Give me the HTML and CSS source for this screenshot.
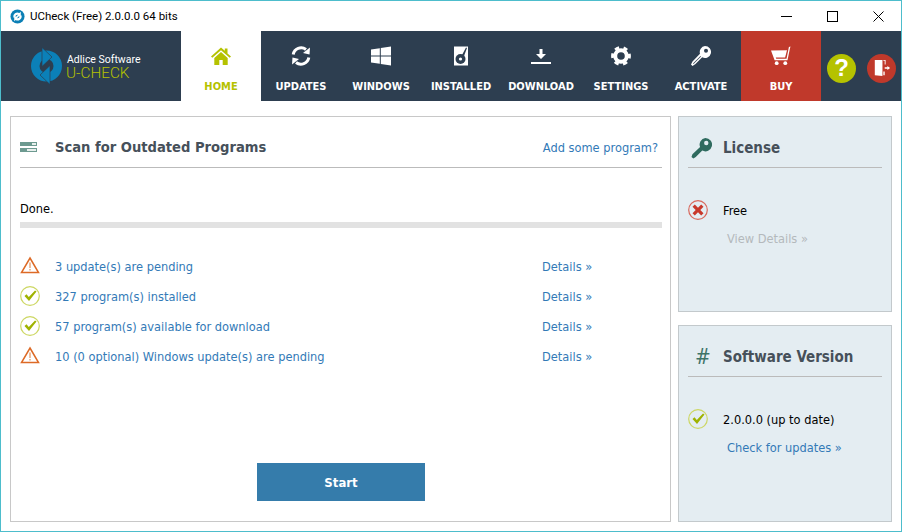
FILE: index.html
```html
<!DOCTYPE html>
<html lang="en">
<head>
<meta charset="utf-8">
<title>UCheck (Free) 2.0.0.0 64 bits</title>
<link rel="stylesheet" href="styles.css">
</head>
<body>
<div class="window">
  <header class="titlebar">
    <svg class="app-icon" viewBox="0 0 16 16"><circle cx="8" cy="8" r="7.500" fill="#0b7fb5"/><path d="M3.500 9a4.500 4.500 0 0 1 6.500-4.700L11.500 3v5H7l1.500-1.800A2.500 2.500 0 0 0 5.500 9zM12.500 7a4.500 4.500 0 0 1-6.500 4.700L4.500 13V8H9l-1.500 1.800A2.500 2.500 0 0 0 10.500 7z" fill="#fff"/></svg>
    <span class="app-title">UCheck (Free) 2.0.0.0 64 bits</span>
    <div class="win-buttons">
      <svg class="win-btn" viewBox="0 0 11 11"><path d="M0 5.500h11" stroke="#000"/></svg>
      <svg class="win-btn" viewBox="0 0 11 11"><rect x=".5" y=".5" width="10" height="10" fill="none" stroke="#000"/></svg>
      <svg class="win-btn" viewBox="0 0 11 11"><path d="M.5.5l10 10M10.500.5l-10 10" stroke="#000"/></svg>
    </div>
  </header>

  <nav class="nav">
    <div class="logo">
      <svg class="logo-mark" viewBox="0 0 34 38"><circle cx="16.500" cy="19" r="15.500" fill="#0b80b8"/><circle cx="16.500" cy="19" r="7" fill="#2d3e50"/><path d="M12 .5L22 10 12 19.500z" fill="#0b80b8" stroke="#2d3e50" stroke-width=".7"/><path d="M20 37.500L10 28l10-9.500z" fill="#0b80b8" stroke="#2d3e50" stroke-width=".7"/></svg>
      <div class="logo-text">
        <span class="logo-top">Adlice Software</span>
        <span class="logo-name">U-CHECK</span>
      </div>
    </div>
    <a class="tab active">
      <svg class="tab-icon" viewBox="0 0 20 20"><path d="M10 1.500L0 10.500l1.300 1.300L10 4.200l8.700 7.600 1.300-1.300-3.500-3.100V2.500h-2.700v2.300z" fill="#b5c200"/><path d="M3.300 12L10 6.100l6.700 5.900v7h-5v-5H8.300v5h-5z" fill="#b5c200"/></svg>
      <span>HOME</span>
    </a>
    <a class="tab">
      <svg class="tab-icon" viewBox="0 0 20 20"><path d="M2.200 8.500A8 8 0 0 1 15 3.500" fill="none" stroke="#fff" stroke-width="3"/><path d="M12 7l6.500 1.500L19 1.500z" fill="#fff"/><path d="M17.800 11.500A8 8 0 0 1 5 16.500" fill="none" stroke="#fff" stroke-width="3"/><path d="M8 13l-6.500-1.500L1 18.500z" fill="#fff"/></svg>
      <span>UPDATES</span>
    </a>
    <a class="tab">
      <svg class="tab-icon" viewBox="0 0 20 20"><path d="M0 3.500l8.800-1.300v7.300H0zM9.800 2L20 .5v9H9.800zM0 10.500h8.800v7.300L0 16.500zM9.800 10.500H20v9L9.800 18z" fill="#fff"/></svg>
      <span>WINDOWS</span>
    </a>
    <a class="tab">
      <svg class="tab-icon" viewBox="0 0 20 20"><path d="M3 .5h14v19H3z" fill="#fff"/><circle cx="9.500" cy="13" r="5" fill="#2d3e50"/><circle cx="9.500" cy="13" r="1.600" fill="#fff"/><path d="M11 9L15 1.500l1 .6-3 8z" fill="#2d3e50"/></svg>
      <span>INSTALLED</span>
    </a>
    <a class="tab">
      <svg class="tab-icon" viewBox="0 0 20 20"><path d="M8.500 3h3v5H15l-5 5-5-5h3.500zM0 16h20v2H0z" fill="#fff"/></svg>
      <span>DOWNLOAD</span>
    </a>
    <a class="tab">
      <svg class="tab-icon" viewBox="0 0 20 20"><circle cx="10" cy="10" r="5.800" fill="none" stroke="#fff" stroke-width="4"/><circle cx="10" cy="10" r="8.200" fill="none" stroke="#fff" stroke-width="3.400" stroke-dasharray="4.300 4.290" stroke-dashoffset="2.150" transform="rotate(-60 10 10)"/></svg>
      <span>SETTINGS</span>
    </a>
    <a class="tab">
      <svg class="tab-icon" viewBox="0 0 20 20"><path fill-rule="evenodd" d="M14 0a6 6 0 1 1-2.800 11.300L4.500 18 1.500 20 0 18.500l1.500-3L9 7.700A6 6 0 0 1 14 0zM15 2.800a2 2 0 1 0 0 4 2 2 0 0 0 0-4z" fill="#fff"/><path d="M2 17.500L9.500 10l.5.500L2.500 18z" fill="#2d3e50"/></svg>
      <span>ACTIVATE</span>
    </a>
    <a class="tab buy">
      <svg class="tab-icon" viewBox="0 0 21 20"><path d="M20.500 0l-1.700.6L16.300 13H5.500l-.5-1.500h9.800L16.800 4 0 4.200l3.800 10.300h13.500L20 1.500z" fill="#fff"/><circle cx="6" cy="17.500" r="2" fill="#fff"/><circle cx="15" cy="17.500" r="2" fill="#fff"/></svg>
      <span>BUY</span>
    </a>
    <div class="nav-actions">
      <div class="round help">?</div>
      <div class="round exit">
        <svg viewBox="0 0 20 20" class="exit-icon"><path d="M2 1h8.500v18L2 18z" fill="#fff"/><path d="M11.500 1H14v5h-1V2h-1.500zM11.500 14H13v4h-1.500zM13 9.300h3V7.800l3 2.200-3 2.200v-1.500h-3z" fill="#fff"/></svg>
      </div>
    </div>
  </nav>

  <main class="content">
    <section class="panel main-panel">
      <div class="panel-head">
        <svg class="head-icon" viewBox="0 0 17 10"><rect y="0" width="17" height="4" fill="#6d9a90"/><rect y="6" width="17" height="4" fill="#6d9a90"/><rect x="12" y="1" width="4" height="2" fill="#e8efed"/><rect x="7" y="7" width="9" height="2" fill="#e8efed"/></svg>
        <h2 class="main-title">Scan for Outdated Programs</h2>
        <a class="link add">Add some program?</a>
      </div>
      <p class="status">Done.</p>
      <div class="progress"></div>
      <ul class="results">
        <li>
          <svg class="ico" viewBox="0 0 20 20"><path d="M10 2L18.500 16.500H1.500z" fill="none" stroke="#dd6a26" stroke-width="1.500"/><path d="M10 6.500v5.500M10 13v1.600" stroke="#edb591" stroke-width="1.800"/></svg>
          <a class="link text">3 update(s) are pending</a><a class="link details">Details »</a>
        </li>
        <li>
          <svg class="ico" viewBox="0 0 20 20"><circle cx="10" cy="10" r="9.300" fill="none" stroke="#cdd763" stroke-width="1.200"/><path d="M4.500 10l2-1.700 2.300 2.700L15 4.500l1.500 1-7.500 9.500z" fill="#9fb300"/></svg>
          <a class="link text">327 program(s) installed</a><a class="link details">Details »</a>
        </li>
        <li>
          <svg class="ico" viewBox="0 0 20 20"><circle cx="10" cy="10" r="9.300" fill="none" stroke="#cdd763" stroke-width="1.200"/><path d="M4.500 10l2-1.700 2.300 2.700L15 4.500l1.500 1-7.500 9.500z" fill="#9fb300"/></svg>
          <a class="link text">57 program(s) available for download</a><a class="link details">Details »</a>
        </li>
        <li>
          <svg class="ico" viewBox="0 0 20 20"><path d="M10 2L18.500 16.500H1.500z" fill="none" stroke="#dd6a26" stroke-width="1.500"/><path d="M10 6.500v5.500M10 13v1.600" stroke="#edb591" stroke-width="1.800"/></svg>
          <a class="link text">10 (0 optional) Windows update(s) are pending</a><a class="link details">Details »</a>
        </li>
      </ul>
      <div class="actions"><button class="start">Start</button></div>
    </section>

    <aside class="side">
      <section class="panel card">
        <div class="panel-head">
          <svg class="card-icon" viewBox="0 0 22 22"><path fill-rule="evenodd" d="M15 0a7 7 0 1 1-3.200 13.200L5 20l-2.500 1.500L.5 20l1-3 8-7.500A7 7 0 0 1 15 0zM16 3a2.300 2.300 0 1 0 0 4.600A2.300 2.300 0 0 0 16 3z" fill="#2f6b5f"/></svg>
          <h2>License</h2>
        </div>
        <div class="info">
          <svg class="ico" viewBox="0 0 20 20"><circle cx="10" cy="10" r="9.300" fill="none" stroke="#d9685c" stroke-width="1.200"/><path d="M6.800 4.500L10 7.700l3.200-3.200 2.300 2.300L12.300 10l3.200 3.200-2.300 2.300-3.200-3.200-3.200 3.200-2.300-2.300L7.700 10 4.500 6.800z" fill="#c8382a"/></svg>
          <span>Free</span>
        </div>
        <a class="sub muted">View Details »</a>
      </section>
      <section class="panel card">
        <div class="panel-head">
          <span class="hash">#</span>
          <h2>Software Version</h2>
        </div>
        <div class="info">
          <svg class="ico" viewBox="0 0 20 20"><circle cx="10" cy="10" r="9.300" fill="none" stroke="#cdd763" stroke-width="1.200"/><path d="M4.500 10l2-1.700 2.300 2.700L15 4.500l1.500 1-7.500 9.500z" fill="#9fb300"/></svg>
          <span>2.0.0.0 (up to date)</span>
        </div>
        <a class="sub link">Check for updates »</a>
      </section>
    </aside>
  </main>
</div>
</body>
</html>
```

FILE: styles.css
```css
* { box-sizing: border-box; }
html, body { margin: 0; padding: 0; }
body { font-family: "DejaVu Sans Condensed", "DejaVu Sans", sans-serif; font-stretch: condensed; font-size: 12.700px; color: #000; background: #fff; }
.window { width: 902px; height: 532px; border: 1px solid #4dbdcc; display: flex; flex-direction: column; overflow: hidden; background: #fff; }

.titlebar { height: 30px; display: flex; align-items: center; padding-left: 9px; flex: none; }
.app-icon { width: 15px; height: 15px; }
.app-title { margin-left: 5px; font-family: Roboto, sans-serif; font-stretch: normal; font-size: 11.500px; }
.win-buttons { margin-left: auto; display: flex; gap: 35px; padding-right: 17px; }
.win-btn { width: 11px; height: 11px; display: block; }

.nav { height: 70px; background: #2d3e50; display: flex; flex: none; }
.logo { width: 180px; display: flex; align-items: center; padding-left: 29px; }
.logo-mark { width: 34px; height: 38px; flex: none; }
.logo-text { display: flex; flex-direction: column; margin-left: 2px; font-family: Roboto, sans-serif; font-stretch: normal; }
.logo-top { color: #fff; font-size: 10.500px; line-height: 13px; margin-left: 1px; }
.logo-name { color: #b5c200; font-size: 15.300px; line-height: 14px; font-weight: 300; }
.tab { width: 80px; display: flex; flex-direction: column; align-items: center; color: #fff; font-weight: bold; font-size: 11px; padding-top: 15px; }
.tab span { margin-top: 14px; }
.tab-icon { width: 20px; height: 20px; display: block; }
.tab.active { background: #fff; color: #b5c200; }
.tab.buy { background: #c0392b; }
.nav-actions { display: flex; align-items: center; gap: 11px; padding-left: 6px; padding-top: 4px; }
.round { width: 29px; height: 29px; border-radius: 50%; display: flex; align-items: center; justify-content: center; }
.help { background: #b5c200; color: #fff; font: bold 24px/1 "Liberation Sans", sans-serif; }
.exit { background: #c0392b; }
.exit-icon { width: 18px; height: 18px; }

.content { flex: 1; display: flex; gap: 7px; padding: 15px 9px 9px 9px; min-height: 0; }
.panel { border: 1px solid #c8c8c8; padding: 0 9px; display: flex; flex-direction: column; }
.main-panel { width: 661px; background: #fff; padding-right: 8px; }
.panel-head { height: 51px; padding-top: 12px; border-bottom: 1px solid #bbb; display: flex; align-items: center; flex: none; }
.panel-head h2 { margin: 0; font-size: 15px; font-weight: bold; color: #46505a; }
.main-panel .panel-head { padding-top: 10px; }
.panel-head .main-title { font-size: 14.600px; margin-bottom: 2px; }
.head-icon { width: 17px; height: 10px; margin: 0 18px 0 0; flex: none; }
.card-icon { width: 21px; height: 21px; margin: 0 11px 0 3px; flex: none; }
.hash { width: 35px; padding-left: 7px; color: #3d7368; font-size: 21px; font-weight: normal; flex: none; }
.link { color: #337ab7; }
.add { margin-left: auto; margin-right: 4px; }

.status { margin: 34px 0 0; line-height: 14px; }
.progress { height: 6px; background: #e2e2e2; margin-top: 6px; flex: none; }
.results { list-style: none; margin: 23px 0 0; padding: 0; }
.results li { height: 30px; display: flex; align-items: center; }
.ico { width: 20px; height: 20px; flex: none; }
.text { margin-left: 15px; width: 487px; }
.actions { margin-top: auto; padding-bottom: 20px; display: flex; justify-content: center; }
.start { width: 168px; height: 38px; border: 0; background-color: #357cab; color: #fff; font: bold 13px "DejaVu Sans Condensed", "DejaVu Sans", sans-serif; font-stretch: condensed; }

.side { width: 214px; display: flex; flex-direction: column; gap: 13px; }
.card { flex: 1; background: #e4edf2; border-color: #c3c9cc; }
.card:first-child { flex: 0 0 196px; }
.info { display: flex; align-items: center; margin-top: 32px; }
.info span { margin-left: 15px; }
.sub { margin: 11px 0 0 39px; }
.muted { color: #b4b9bc; }
```
